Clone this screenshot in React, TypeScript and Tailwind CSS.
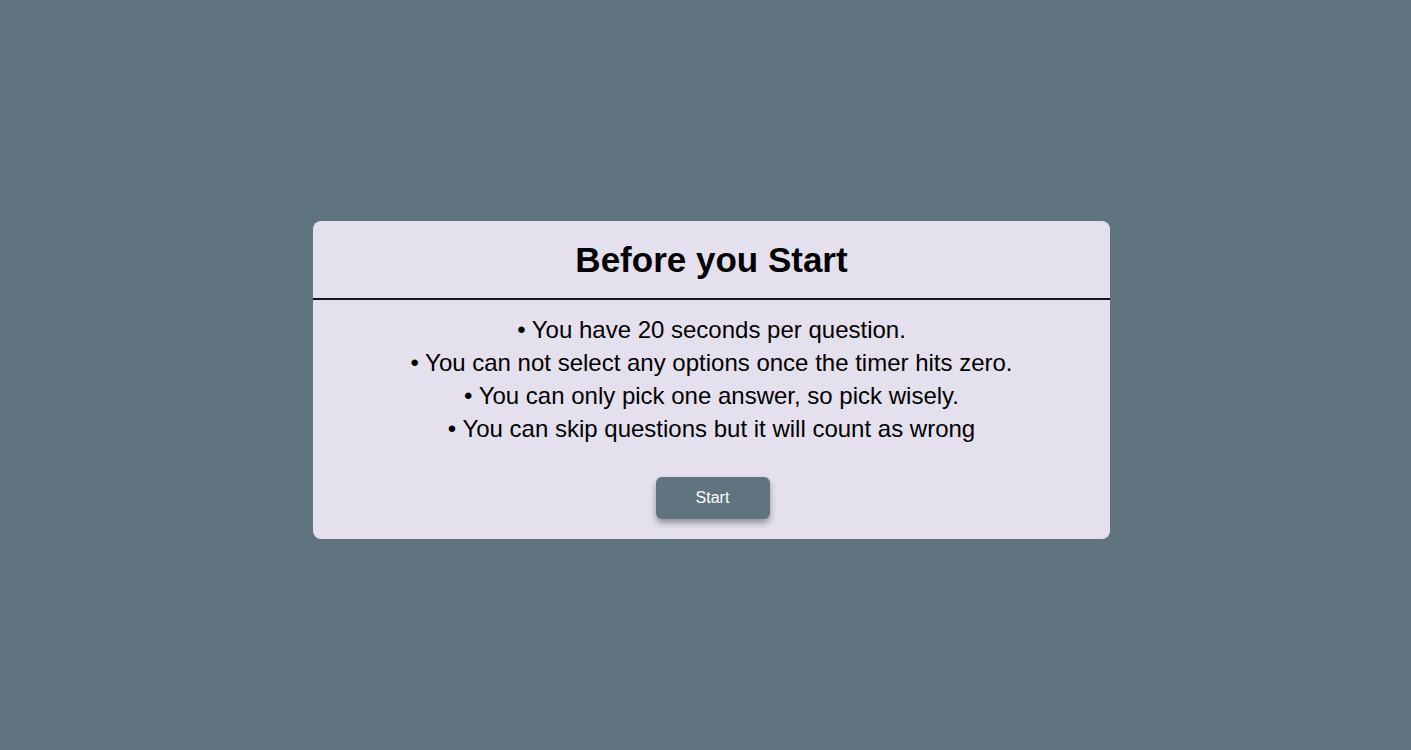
export default function App() {
  const rules = [
    "You have 20 seconds per question.",
    "You can not select any options once the timer hits zero.",
    "You can only pick one answer, so pick wisely.",
    "You can skip questions but it will count as wrong",
  ];

  return (
    <div className="flex min-h-[750px] w-full justify-center bg-[#5f747e] pl-[12px] pt-[221px] font-['Liberation_Sans',Arial,sans-serif]">
      {/* rules card */}
      <div className="flex h-[318px] w-[797px] flex-col rounded-[8px] bg-[#e5e0ee] text-black">
        <div className="flex h-[77px] items-center justify-center">
          <h1 className="text-[35px] font-bold leading-none">Before you Start</h1>
        </div>
        <div className="h-[2px] w-full bg-[#151515]" />
        <div className="flex flex-col items-center pt-[13px]">
          {rules.map(rule => (
            <p key={rule} className="text-[24px] leading-[33px]">
              • {rule}
            </p>
          ))}
          <button className="ml-[2px] mt-[32px] h-[42px] w-[114px] rounded-[6px] bg-[#5f747e] text-[16px] text-white shadow-[0_4px_6px_rgba(0,0,0,0.35)]">
            Start
          </button>
        </div>
      </div>
    </div>
  );
}
